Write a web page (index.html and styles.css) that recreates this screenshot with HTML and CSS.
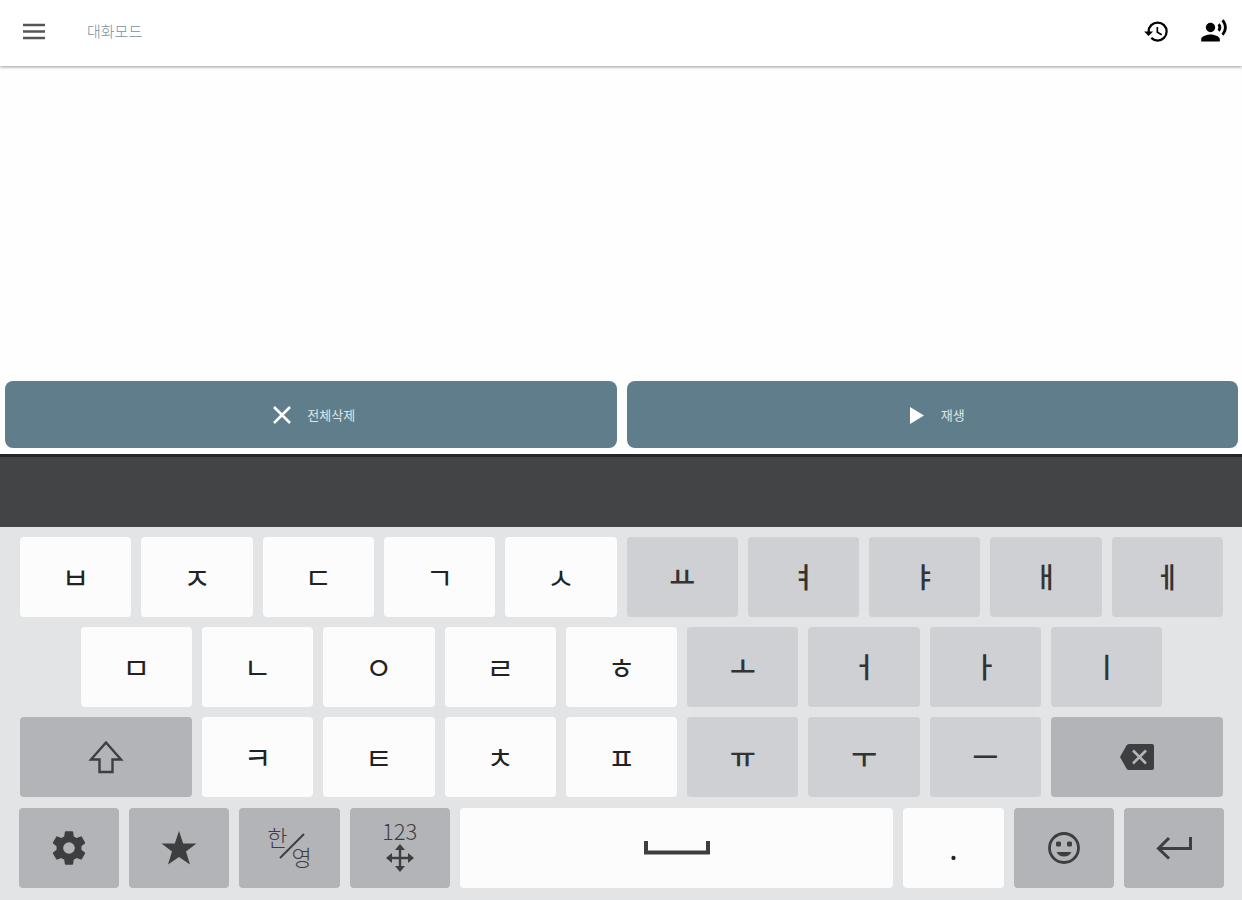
FILE: index.html
```
<!DOCTYPE html>
<html lang="ko">
<head>
    <meta charset="UTF-8">
    <meta name="viewport" content="width=device-width, initial-scale=1.0">
    <title>대화모드</title>
    <link rel="stylesheet" href="styles.css">
</head>
<body>
    <header class="app-bar">
        <button class="icon-button" aria-label="메뉴">
            <svg width="24" height="24" viewBox="0 0 24 24" fill="none" stroke="#555" stroke-width="2.600"><path d="M1 6h22M1 12.500h22M1 19h22"/></svg>
        </button>
        <h1>대화모드</h1>
        <button class="icon-button" aria-label="기록">
            <svg width="27" height="27" viewBox="0 0 24 24"><path d="M13 3a9 9 0 0 0-9 9H1l3.890 3.890.070.140L9 12H6a7 7 0 1 1 7 7 6.970 6.970 0 0 1-4.940-2.060l-1.420 1.420A8.950 8.950 0 0 0 13 21a9 9 0 0 0 0-18zm-1 5v5l4.280 2.540.720-1.210-3.500-2.080V8H12z"/></svg>
        </button>
        <button class="icon-button" aria-label="음성">
            <svg width="28" height="28" viewBox="0 0 24 24"><circle cx="9" cy="9" r="4"/><path d="M9 15c-2.670 0-8 1.340-8 4v2h16v-2c0-2.660-5.330-4-8-4zM16.760 5.360l-1.680 1.690c.840 1.180.840 2.710 0 3.890l1.680 1.690c2.020-2.020 2.020-5.070 0-7.270zM20.070 2l-1.630 1.630c2.770 3.020 2.770 7.560 0 10.740L20.070 16c3.900-3.890 3.910-9.950 0-14z"/></svg>
        </button>
    </header>

    <main>
        <textarea class="message" aria-label="메시지"></textarea>
        <div class="actions">
            <button class="action">
                <svg width="20" height="20" viewBox="0 0 20 20" fill="none" stroke="#fff" stroke-width="2.600"><path d="M2 2l16 16M18 2L2 18"/></svg>
                <span>전체삭제</span>
            </button>
            <button class="action">
                <svg width="20" height="20" viewBox="0 0 20 20" fill="#fff"><path d="M4 2v17l14-8.500z"/></svg>
                <span>재생</span>
            </button>
        </div>
    </main>

    <div class="suggestions"></div>

    <section class="keyboard" aria-label="키보드">
        <div class="letters">
            <button class="key">ㅂ</button>
            <button class="key">ㅈ</button>
            <button class="key">ㄷ</button>
            <button class="key">ㄱ</button>
            <button class="key">ㅅ</button>
            <button class="key vowel">ㅛ</button>
            <button class="key vowel">ㅕ</button>
            <button class="key vowel">ㅑ</button>
            <button class="key vowel">ㅐ</button>
            <button class="key vowel">ㅔ</button>

            <button class="key indent">ㅁ</button>
            <button class="key">ㄴ</button>
            <button class="key">ㅇ</button>
            <button class="key">ㄹ</button>
            <button class="key">ㅎ</button>
            <button class="key vowel">ㅗ</button>
            <button class="key vowel">ㅓ</button>
            <button class="key vowel">ㅏ</button>
            <button class="key vowel">ㅣ</button>

            <button class="key control wide" aria-label="Shift">
                <svg width="36" height="34" viewBox="0 0 36 34" fill="none" stroke="#3c3e3f" stroke-width="2.400"><path d="M18 2.500L3 19.500h8.500V32h13V19.500H33z"/></svg>
            </button>
            <button class="key">ㅋ</button>
            <button class="key">ㅌ</button>
            <button class="key">ㅊ</button>
            <button class="key">ㅍ</button>
            <button class="key vowel">ㅠ</button>
            <button class="key vowel">ㅜ</button>
            <button class="key vowel">ㅡ</button>
            <button class="key control wide" aria-label="지우기">
                <svg width="36" height="28" viewBox="0 0 36 28"><path fill="#3c3e3f" d="M10 1h23q2 0 2 2v22q0 2-2 2H10q-1.500 0-2.500-1.500L1 14l6.500-11.500Q8.500 1 10 1z"/><path fill="none" stroke="#b3b4b7" stroke-width="2.600" d="M14 7.500l13 13M27 7.500l-13 13"/></svg>
            </button>
        </div>

        <div class="bottom-row">
            <button class="key control" aria-label="설정">
                <svg width="40" height="40" viewBox="0 0 24 24" fill="#3c3e3f"><path d="M19.430 12.980c.040-.320.070-.640.070-.980s-.030-.660-.070-.980l2.110-1.650c.190-.150.240-.420.120-.640l-2-3.460c-.120-.220-.390-.300-.610-.220l-2.490 1c-.520-.400-1.080-.730-1.690-.980l-.380-2.650C14.460 2.180 14.250 2 14 2h-4c-.250 0-.460.180-.490.420l-.380 2.650c-.610.250-1.170.590-1.690.980l-2.490-1c-.230-.090-.490 0-.610.220l-2 3.460c-.130.220-.070.490.120.640l2.110 1.650c-.040.320-.070.650-.070.980s.030.660.070.980l-2.110 1.650c-.190.150-.240.420-.120.640l2 3.460c.120.220.390.300.610.220l2.490-1c.520.400 1.080.730 1.690.980l.380 2.650c.030.240.240.420.490.420h4c.250 0 .460-.180.490-.420l.380-2.650c.610-.250 1.170-.590 1.690-.980l2.490 1c.230.090.490 0 .610-.220l2-3.460c.120-.220.070-.490-.120-.640l-2.110-1.650zM12 15.500a3.500 3.500 0 1 1 0-7 3.500 3.500 0 0 1 0 7z"/></svg>
            </button>
            <button class="key control" aria-label="즐겨찾기">
                <svg width="36" height="36" viewBox="0 0 36 36" fill="#3c3e3f"><path d="M18 1l4.200 12.500H35.500L25 21.500 29 34.500l-11-7.500-11 7.500 4-13L.500 13.500h13.300z"/></svg>
            </button>
            <button class="key control language">
                <span class="korean">한</span>
                <svg width="26" height="26" viewBox="0 0 26 26" stroke="#3c3e3f" stroke-width="2"><path d="M1 25L25 1"/></svg>
                <span class="english">영</span>
            </button>
            <button class="key control numbers">
                <span>123</span>
                <svg width="28" height="28" viewBox="0 0 28 28"><path fill="none" stroke="#3c3e3f" stroke-width="2.400" d="M14 3v22M3 14h22"/><path fill="#3c3e3f" d="M14 0l5 6H9zM14 28l5-6H9zM0 14l6-5v10zM28 14l-6-5v10z"/></svg>
            </button>
            <button class="key control space" aria-label="스페이스">
                <svg width="66" height="14" viewBox="0 0 66 14" fill="none" stroke="#3c3e3f" stroke-width="4"><path d="M2 0v11.500h62V0"/></svg>
            </button>
            <button class="key">.</button>
            <button class="key control" aria-label="이모지">
                <svg width="34" height="34" viewBox="0 0 34 34" fill="#3c3e3f"><circle cx="17" cy="17" r="14.500" fill="none" stroke="#3c3e3f" stroke-width="2.800"/><rect x="9" y="10.500" width="5" height="5" rx="1.500"/><rect x="20" y="10.500" width="5" height="5" rx="1.500"/><path d="M9.500 21h15c-1.500 3-4.200 4.500-7.500 4.500S11 24 9.500 21z"/></svg>
            </button>
            <button class="key control" aria-label="엔터">
                <svg width="38" height="24" viewBox="0 0 38 24" fill="none" stroke="#3c3e3f" stroke-width="3"><path d="M35.500 1v11.500H4M14 2L3.500 12.500 14 22.500"/></svg>
            </button>
        </div>
    </section>
</body>
</html>
```
FILE: styles.css
```
* {
    box-sizing: border-box;
}

body {
    font-family: "Noto Sans CJK KR", sans-serif;
    background-color: #fefefe;
    margin: 0;
    display: flex;
    flex-direction: column;
    min-height: 100vh;
}

button {
    border: none;
    padding: 0;
    font-family: inherit;
    cursor: pointer;
}

svg {
    display: block;
    flex: none;
}

.app-bar {
    display: flex;
    align-items: center;
    height: 66px;
    padding: 0 14px 4px 22px;
    background-color: #fff;
    box-shadow: 0 1px 3px rgba(0, 0, 0, 0.4);
}

.app-bar h1 {
    flex: 1;
    margin: 0 0 0 41px;
    font-size: 15px;
    line-height: 20px;
    font-weight: 300;
    color: #78909c;
}

.icon-button {
    background: none;
}

.icon-button + .icon-button {
    margin-left: 30px;
}

main {
    flex: 1;
    display: flex;
    flex-direction: column;
}

.message {
    flex: 1;
    width: 100%;
    margin-top: 3px;
    padding: 16px;
    border: none;
    outline: none;
    resize: none;
    background: none;
    font-family: inherit;
    font-size: 24px;
}

.actions {
    display: flex;
    gap: 10px;
    padding: 5px 4px 6px 5px;
}

.action {
    flex: 1;
    display: flex;
    justify-content: center;
    align-items: center;
    gap: 15px;
    height: 67px;
    padding-left: 6px;
    border-radius: 8px;
    background-color: #607d8b;
    color: #dfe6e9;
    font-size: 13px;
}

.suggestions {
    height: 73px;
    background-color: #424446;
    border-top: 3px solid #242527;
}

.keyboard {
    padding: 10px 18px 12px 19px;
    background-color: #e2e4e6;
}

.letters {
    display: grid;
    grid-template-columns: repeat(20, 1fr);
    gap: 10px;
    padding: 0 1px 11px;
}

.key {
    grid-column: span 2;
    display: flex;
    justify-content: center;
    align-items: center;
    min-width: 0;
    height: 80px;
    padding-bottom: 3px;
    border-radius: 4px;
    background-color: #fcfcfc;
    color: #222;
    font-size: 30px;
    line-height: 36px;
}

.vowel {
    background-color: #ced0d3;
    color: #333;
    font-size: 28px;
    font-weight: 500;
}

.control {
    padding-bottom: 0;
    background-color: #b3b4b7;
    color: #3c3e3f;
}

.indent {
    grid-column: 2 / span 2;
}

/* shift and delete */
.wide {
    grid-column: span 3;
}

.bottom-row {
    display: flex;
    gap: 10px;
}

.bottom-row .key {
    flex: 100 1 0;
}

.bottom-row .space {
    flex-grow: 433;
    background-color: #fcfcfc;
}

.language {
    padding-bottom: 4px;
    font-size: 22px;
    font-weight: 300;
    line-height: 24px;
}

.language .korean {
    margin: 0 -8px 20px 0;
}

.language .english {
    margin: 20px 0 0 -14px;
}

.numbers {
    padding-bottom: 8px;
    flex-direction: column;
    font-size: 22px;
    font-weight: 300;
    line-height: 28px;
}
```
